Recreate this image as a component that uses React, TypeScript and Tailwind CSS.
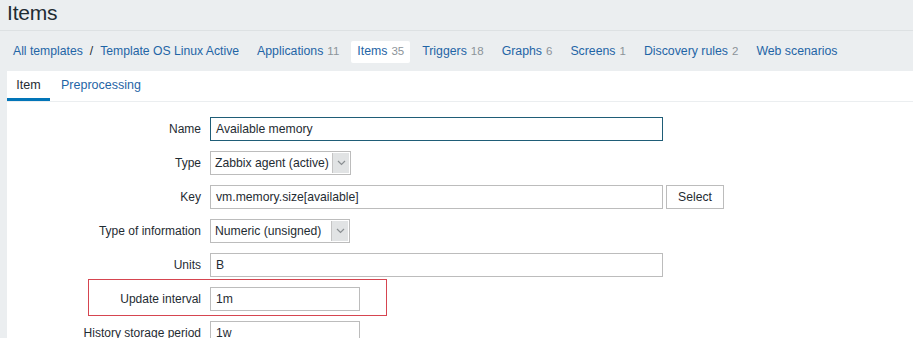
import React from 'react';

const nav = [
  { label: 'Applications', count: '11' },
  { label: 'Items', count: '35', active: true },
  { label: 'Triggers', count: '18' },
  { label: 'Graphs', count: '6' },
  { label: 'Screens', count: '1' },
  { label: 'Discovery rules', count: '2' },
  { label: 'Web scenarios' },
];

function Label({ children }: { children: React.ReactNode }) {
  return <div className="w-[194px] shrink-0 text-right text-[12px] text-[#1f2c33] whitespace-nowrap">{children}</div>;
}

function TextInput({ value, width, focused }: { value: string; width: string; focused?: boolean }) {
  return (
    <div
      className={`${width} h-[24px] flex items-center px-[5px] text-[12.2px] text-[#1f2c33] bg-white border whitespace-nowrap ${
        focused ? 'border-[#1f5d77]' : 'border-[#bcbcbc]'
      }`}
    >
      {value}
    </div>
  );
}

function Select({ value, width }: { value: string; width: string }) {
  return (
    <div className={`${width} h-[24px] flex items-stretch bg-white border border-[#bcbcbc] text-[12.2px] text-[#1f2c33] whitespace-nowrap`}>
      <div className="flex-1 flex items-center px-[4px] overflow-hidden">{value}</div>
      <div className="w-[17px] shrink-0 my-[1px] mr-[1px] bg-[#e1e3e4] border-l border-[#c4c4c4] flex items-center justify-center">
        <svg width="9" height="6" viewBox="0 0 9 6" fill="none" stroke="#8a8f92" strokeWidth="1.2">
          <path d="M1 1l3.5 3.5L8 1" />
        </svg>
      </div>
    </div>
  );
}

export default function App() {
  return (
    <div className="w-[913px] h-[338px] overflow-hidden bg-[#ebeef0]" style={{ fontFamily: '"Liberation Sans", Arial, sans-serif' }}>
      <div className="px-[7px] h-[31px] border-b border-[#dde1e3] flex items-start">
        <h1 className="text-[21px] leading-[26px] text-[#1f2c33] tracking-[-0.2px]">Items</h1>
      </div>

      <div className="h-[40px] flex items-center pl-[13px] pt-[1px] whitespace-nowrap">
        <span className="text-[12.2px] text-[#1f65a6]">All templates</span>
        <span className="text-[12.2px] mx-[7px] text-[#1f2c33]">/</span>
        <span className="text-[12.2px] text-[#1f65a6]">Template OS Linux Active</span>
        <div className="flex items-center ml-[12px] gap-[6px] text-[12.3px]">
          {nav.map((n) => (
            <div
              key={n.label}
              className={`h-[22px] flex items-center px-[6px] rounded-[2px] ${n.active ? 'bg-white' : ''}`}
            >
              <span className="text-[#1f65a6]">{n.label}</span>
              {n.count && <span className="ml-[4px] text-[11.5px] text-[#8c9399]">{n.count}</span>}
            </div>
          ))}
        </div>
      </div>

      <div className="ml-[7px] bg-white h-[300px]">
        <div className="h-[31px] flex items-end border-b border-[#ebeef0] text-[12.5px]">
          <div className="w-[43px] h-full flex items-center justify-center text-[#1f2c33] border-b-[3px] border-[#0275b8] pt-[2px]">
            Item
          </div>
          <div className="h-full flex items-center px-[11px] text-[#1f65a6] pt-[2px] pb-[3px]">Preprocessing</div>
        </div>

        <div className="pt-[15px] flex flex-col gap-[10px]">
          <div className="flex items-center gap-[9px]">
            <Label>Name</Label>
            <TextInput value="Available memory" width="w-[453px]" focused />
          </div>
          <div className="flex items-center gap-[9px]">
            <Label>Type</Label>
            <Select value="Zabbix agent (active)" width="w-[141px]" />
          </div>
          <div className="flex items-center gap-[9px]">
            <Label>Key</Label>
            <TextInput value="vm.memory.size[available]" width="w-[453px]" />
            <div className="-ml-[6px] w-[58px] h-[24px] border border-[#bcbcbc] bg-white flex items-center justify-center text-[12.2px] text-[#1f2c33]">
              Select
            </div>
          </div>
          <div className="flex items-center gap-[9px]">
            <Label>Type of information</Label>
            <Select value="Numeric (unsigned)" width="w-[140px]" />
          </div>
          <div className="flex items-center gap-[9px]">
            <Label>Units</Label>
            <TextInput value="B" width="w-[453px]" />
          </div>
          <div className="relative flex items-center gap-[9px]">
            <div className="absolute left-[81px] top-[-8px] w-[299px] h-[37px] border border-[#d64550]" />
            <Label>Update interval</Label>
            <TextInput value="1m" width="w-[150px]" />
          </div>
          <div className="flex items-center gap-[9px]">
            <Label>History storage period</Label>
            <TextInput value="1w" width="w-[150px]" />
          </div>
        </div>
      </div>
    </div>
  );
}
